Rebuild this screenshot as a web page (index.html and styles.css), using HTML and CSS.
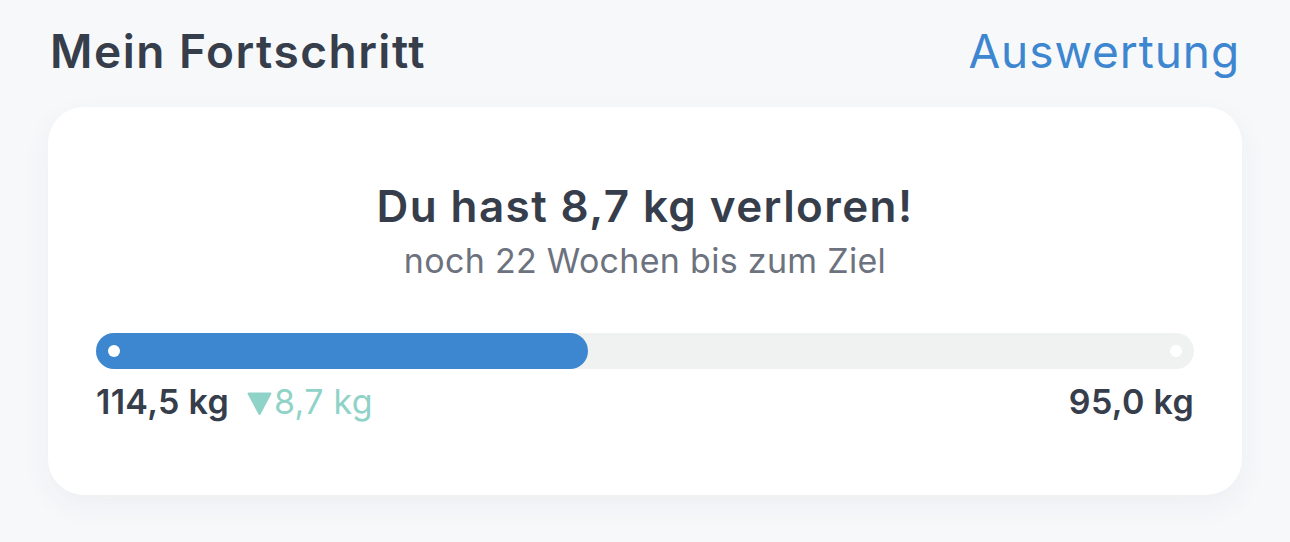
FILE: index.html
```html
<!DOCTYPE html>
<html lang="de">
<head>
<meta charset="utf-8">
<link rel="stylesheet" href="styles.css">
</head>
<body>
<div class="page">
  <header class="head">
    <h1 class="title">Mein Fortschritt</h1>
    <a class="link">Auswertung</a>
  </header>
  <section class="card">
    <h2 class="headline">Du hast 8,7 kg verloren!</h2>
    <p class="sub">noch 22 Wochen bis zum Ziel</p>
    <div class="track">
      <div class="fill" style="width:44.8%"><span class="dot"></span></div>
      <span class="dot end"></span>
    </div>
    <div class="labels">
      <div class="start"><span class="strong">114,5 kg</span><span class="delta"><svg class="tri" width="24" height="22" viewBox="0 0 24 22"><path d="M1.5 1.5 H22.5 L12 21 Z" fill="#8fd3c8" stroke="#8fd3c8" stroke-width="2" stroke-linejoin="round"/></svg>8,7 kg</span></div>
      <span class="strong">95,0 kg</span>
    </div>
  </section>
</div>
</body>
</html>
```
FILE: styles.css
```css
* { box-sizing: border-box; }
html, body { margin: 0; padding: 0; }
body {
  background: #f7f8fa;
  font-family: "Inter", "Noto Sans", sans-serif;
  color: #363d4b;
  width: 1290px;
  height: 542px;
  overflow: hidden;
}
.page { padding: 23px 48px 0 48px; }
.head {
  display: flex;
  justify-content: space-between;
  align-items: center;
  padding: 0 4px 0 2px;
  height: 56px;
}
.title {
  margin: 0;
  font-size: 46px;
  line-height: 56px;
  font-weight: 600;
  letter-spacing: 1.5px;
  color: #363d4b;
}
.link {
  font-size: 46px;
  line-height: 56px;
  font-weight: 400;
  color: #3d86d0;
  letter-spacing: 0.9px;
  margin-right: -2px;
}
.card {
  margin-top: 28px;
  background: #fff;
  border-radius: 36px;
  height: 388px;
  padding: 73px 48px 0 48px;
  box-shadow: 0 10px 30px rgba(40, 50, 70, 0.05);
  display: flex;
  flex-direction: column;
  align-items: center;
}
.headline {
  margin: 0;
  font-size: 44px;
  font-weight: 600;
  line-height: 52px;
  letter-spacing: 1.4px;
  color: #363d4b;
}
.sub {
  margin: 9px 0 0 0;
  font-size: 34px;
  line-height: 40px;
  letter-spacing: 0.3px;
  color: #6c727e;
  font-weight: 400;
}
.track {
  align-self: stretch;
  margin-top: 52px;
  height: 36px;
  border-radius: 18px;
  background: #f0f2f2;
  position: relative;
  display: flex;
}
.fill {
  height: 36px;
  border-radius: 18px;
  background: #3d86d0;
  display: flex;
  align-items: center;
  padding-left: 12px;
}
.dot {
  width: 12px;
  height: 12px;
  border-radius: 50%;
  background: #fff;
  display: block;
}
.dot.end {
  position: absolute;
  right: 12px;
  top: 12px;
}
.labels {
  align-self: stretch;
  display: flex;
  justify-content: space-between;
  align-items: center;
  margin-top: 13px;
  font-size: 34px;
  line-height: 40px;
  letter-spacing: 0.3px;
}
.strong { font-weight: 600; color: #363d4b; }
.start { display: flex; align-items: center; }
.delta {
  display: inline-flex;
  align-items: center;
  margin-left: 18px;
  color: #8fd3c8;
  font-weight: 400;
}
.tri { margin-right: 2px; margin-top: 2px; width: 25px; height: 23px; }
```
